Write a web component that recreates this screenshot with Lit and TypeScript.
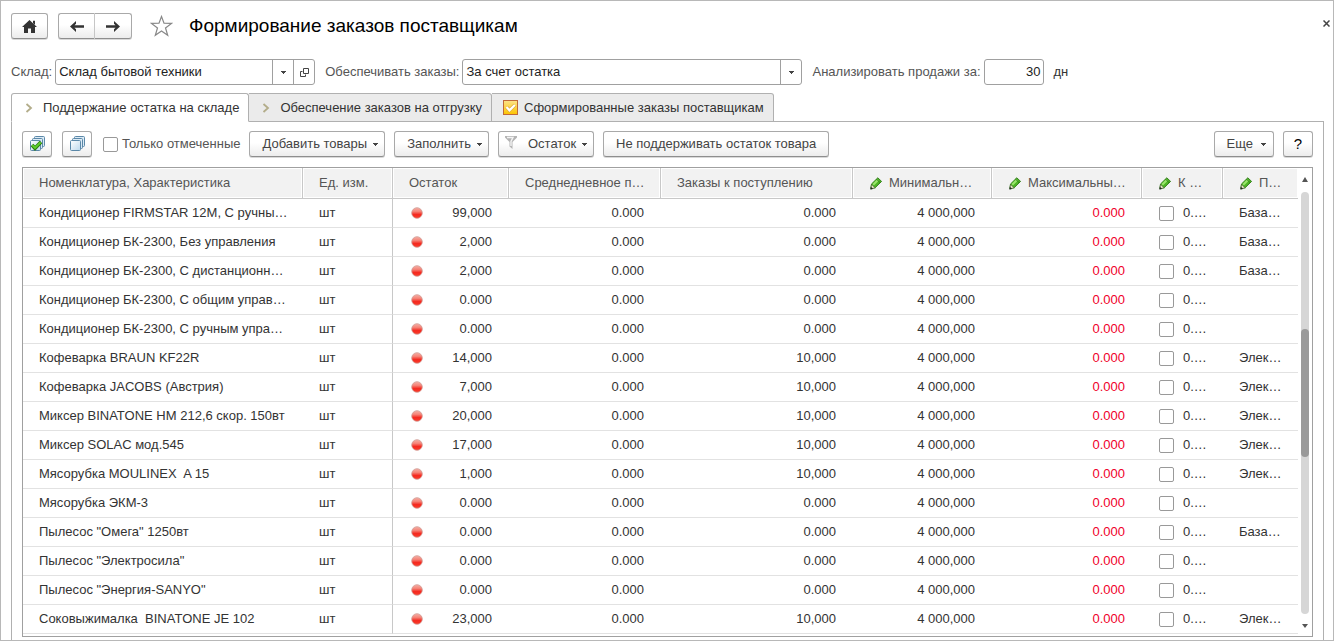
import { LitElement, html, css, svg, nothing } from "lit";
import { customElement, state } from "lit/decorators.js";

interface StockRow {
  name: string;
  rest: string;
  incoming: string;
  method: string;
}

const NO_VALUE = "0.000";

const ROWS: StockRow[] = [
  { name: "Кондиционер FIRMSTAR 12М, С ручны…", rest: "99,000", incoming: NO_VALUE, method: "База…" },
  { name: "Кондиционер БК-2300, Без управления", rest: "2,000", incoming: NO_VALUE, method: "База…" },
  { name: "Кондиционер БК-2300, С дистанционн…", rest: "2,000", incoming: NO_VALUE, method: "База…" },
  { name: "Кондиционер БК-2300, С общим управ…", rest: NO_VALUE, incoming: NO_VALUE, method: "" },
  { name: "Кондиционер БК-2300, С ручным упра…", rest: NO_VALUE, incoming: NO_VALUE, method: "" },
  { name: "Кофеварка BRAUN KF22R", rest: "14,000", incoming: "10,000", method: "Элек…" },
  { name: "Кофеварка JACOBS (Австрия)", rest: "7,000", incoming: "10,000", method: "Элек…" },
  { name: "Миксер BINATONE HM 212,6 скор. 150вт", rest: "20,000", incoming: "10,000", method: "Элек…" },
  { name: "Миксер SOLAC мод.545", rest: "17,000", incoming: "10,000", method: "Элек…" },
  { name: "Мясорубка MOULINEX  A 15", rest: "1,000", incoming: "10,000", method: "Элек…" },
  { name: "Мясорубка ЭКМ-3", rest: NO_VALUE, incoming: NO_VALUE, method: "" },
  { name: 'Пылесос "Омега" 1250вт', rest: NO_VALUE, incoming: NO_VALUE, method: "База…" },
  { name: 'Пылесос "Электросила"', rest: NO_VALUE, incoming: NO_VALUE, method: "" },
  { name: 'Пылесос "Энергия-SANYO"', rest: NO_VALUE, incoming: NO_VALUE, method: "" },
  { name: "Соковыжималка  BINATONE JE 102", rest: "23,000", incoming: "10,000", method: "Элек…" },
];

const caret = html`<svg class="caret" width="5" height="3" viewBox="0 0 5 3" aria-hidden="true">
  <path d="M0 0h5v1H4v1H3v1H2V2H1V1H0z" fill="#444" />
</svg>`;

const chevron = html`<svg width="8" height="10" viewBox="0 0 8 10" aria-hidden="true">
  <path d="M1.5 1l4.5 4-4.5 4" fill="none" stroke="#b3ad8a" stroke-width="1.8" />
</svg>`;

const pencil = html`<svg width="12" height="13" viewBox="0 0 12 13" aria-hidden="true">
  <path d="M.8 11.8L1.500 7 7.800.8l3.800 3.600-6.400 6.300z" fill="#4fb526" stroke="#2f7a16" stroke-width=".9" />
  <path d="M3.200 7.800L8 3" stroke="#9be66c" stroke-width="2" />
  <path d="M6.400 2l4 4" stroke="#2f7a16" stroke-width=".9" />
  <path d="M1.600 7.400l3.600 3.500-4.400.9z" fill="#e6e2c4" stroke="#3f5a2c" stroke-width=".6" />
  <path d="M.4 12.400l.5-2.600 2.100 2.100z" fill="#222" />
</svg>`;

const sheets = (checked: boolean) => html`<svg width="17" height="16" viewBox="0 0 17 16" aria-hidden="true">
  <defs>
    <linearGradient id="sheet" x1="0" y1="0" x2="1" y2="1">
      <stop offset="0" stop-color="#fff" />
      <stop offset="1" stop-color="#bcd8ec" />
    </linearGradient>
  </defs>
  <g stroke="#5b88a8" fill="#dcebf6">
    <rect x="5.500" y=".5" width="10" height="10" rx="1" />
    <rect x="3.500" y="2.500" width="10" height="10" rx="1" />
    <rect x="1.500" y="4.500" width="10" height="10" rx="1" fill="url(#sheet)" />
  </g>
  ${checked
    ? svg`<path d="M3 9l3 3.300L12 6" fill="none" stroke="#2c7d12" stroke-width="3.600" />
        <path d="M3.300 9.200L6 12l5.600-5.600" fill="none" stroke="#5fd02c" stroke-width="1.900" />`
    : nothing}
</svg>`;

const ball = html`<svg width="14" height="14" viewBox="0 0 14 14" role="img" aria-label="Ниже нормы">
  <defs>
    <linearGradient id="ball" x1="0" y1="0" x2="0" y2="1">
      <stop offset="0" stop-color="#f5b0a6" />
      <stop offset=".35" stop-color="#f58478" />
      <stop offset=".65" stop-color="#f5281e" />
      <stop offset="1" stop-color="#f8402f" />
    </linearGradient>
  </defs>
  <circle cx="7" cy="7" r="5.300" fill="url(#ball)" stroke="#cf9a94" stroke-width=".8" />
</svg>`;

@customElement("app-root")
export class AppRoot extends LitElement {
  @state() private activeTab = 0;

  static styles = css`
    :host {
      display: block;
      box-sizing: border-box;
      height: 100vh;
      overflow: hidden;
      border: 1px solid #b8b8b8;
      padding: 12px 9px 0 10px;
      background: #fff;
      color: #333;
      font: 13px/16px "Liberation Sans", Arial, sans-serif;
    }
    *, *::before, *::after { box-sizing: border-box; }
    button, input, select { font: inherit; color: inherit; margin: 0; }
    svg { display: block; flex: none; }
    .header { display: flex; align-items: center; height: 26px; margin-right: -6px; }
    .button {
      display: inline-flex;
      align-items: center;
      justify-content: center;
      height: 26px;
      padding: 0 12px;
      border: 1px solid #a9a9a9;
      border-bottom-color: #8e8e8e;
      border-radius: 3px;
      background: linear-gradient(#fff 45%, #ececec);
      box-shadow: 0 1px 0 #d9d9d9;
      color: #444;
      white-space: nowrap;
    }
    .home { width: 37px; padding: 0; }
    .nav { display: flex; margin-left: 10px; }
    .nav .button { width: 37px; padding: 0; }
    .nav .back { border-radius: 3px 0 0 3px; border-right-color: #c6c6c6; }
    .nav .forward { border-radius: 0 3px 3px 0; border-left: 0; }
    .plain { display: flex; padding: 0; border: 0; background: none; }
    .star { margin-left: 18px; }
    h1 { margin: 0 auto 0 16px; font-size: 19px; line-height: 22px; font-weight: 400; color: #000; }
    .close { margin: 0 0 6px; }
    .filters { display: flex; align-items: center; margin-top: 20px; height: 26px; white-space: nowrap; }
    .filters label { color: #555; margin-right: 3px; }
    .field {
      display: flex;
      height: 26px;
      margin-right: 10px;
      border: 1px solid #a0a0a0;
      border-radius: 3px;
      background: #fff;
      color: #222;
      overflow: hidden;
    }
    .warehouse { flex: 0 1 260px; }
    .supply { flex: 0 1 340px; }
    .days { flex: 0 1 60px; }
    .combo { flex: 1; display: grid; grid-template-columns: 1fr 21px; min-width: 0; }
    .combo select {
      grid-area: 1 / 1 / 2 / 3;
      appearance: none;
      border: 0;
      background: none;
      padding: 0 24px 0 3px;
      min-width: 0;
    }
    .drop {
      grid-area: 1 / 2 / 2 / 3;
      display: flex;
      align-items: center;
      justify-content: center;
      border-left: 1px solid #a0a0a0;
      pointer-events: none;
    }
    .open { width: 21px; align-items: center; justify-content: center; border-left: 1px solid #a0a0a0; }
    .days input { width: 100%; min-width: 0; border: 0; padding: 0 2px; text-align: right; background: none; }
    .tabs { display: flex; position: relative; z-index: 1; margin-top: 8px; }
    .tab {
      display: flex;
      align-items: center;
      height: 29px;
      padding: 0 9px 0 13px;
      border: 1px solid #b0b0b0;
      border-left-width: 0;
      border-radius: 0 3px 0 0;
      background: #ebebeb;
      color: #333;
      gap: 10px;
      white-space: nowrap;
    }
    .tab:first-child { border-left-width: 1px; border-radius: 3px 3px 0 0; }
    .tab.active { background: #fff; border-bottom-color: #fff; }
    .tab.done { padding-left: 11px; gap: 6px; }
    .panel { margin-top: -1px; padding: 9px 10px 0; border: 1px solid #b0b0b0; min-height: 100vh; }
    .toolbar { display: flex; align-items: center; height: 26px; gap: 9px; }
    .tool { width: 30px; padding: 0; }
    .tool + .tool { margin-left: 1px; }
    .only { display: flex; align-items: center; gap: 4px; margin-left: 2px; color: #555; white-space: nowrap; }
    .check {
      appearance: none;
      flex: none;
      width: 15px;
      height: 15px;
      border: 1px solid #999;
      border-radius: 2px;
      background: #fff;
    }
    .check:checked { background: #7fb74c; }
    .menu { padding: 0 6px 0 12px; gap: 6px; }
    .menu.filter { padding-left: 6px; }
    .menu.more { padding-right: 7px; gap: 8px; }
    .filter svg:first-child { margin: 0 5px 4px 0; }
    .spacer { flex: 1; }
    .help { width: 30px; padding: 0; font-size: 15px; color: #000; }
    .grid {
      display: flex;
      margin-top: 10px;
      border: 1px solid #a0a0a0;
      padding-bottom: 2px;
    }
    table { flex: 1; min-width: 0; width: 100%; table-layout: fixed; border-spacing: 0; }
    th, td { padding: 0 16px; text-align: left; font-weight: 400; white-space: pre; overflow: hidden; }
    th {
      height: 31px;
      color: #555;
      background: #f2f2f2;
      border-right: 1px solid #c8c8c8;
      border-bottom: 1px solid #c8c8c8;
      box-shadow: inset 0 0 0 1px #fff;
    }
    th:last-child { border-right: 0; }
    td { height: 29px; border-bottom: 1px solid #e2e2e2; }
    td.unit { border-right: 1px solid #c8c8c8; }
    td.number { padding-right: 17px; text-align: right; }
    td.red { color: #f0002a; }
    .pair { display: flex; align-items: center; justify-content: space-between; margin: 0 1px; }
    .mark { display: flex; align-items: center; gap: 7px; margin-left: 1px; }
    td .mark { gap: 9px; }
    .c-name { width: 280px; }
    .c-unit { width: 90px; }
    .c-rest { width: 116px; }
    .c-daily { width: 152px; }
    .c-incoming { width: 192px; }
    .c-min { width: 139px; }
    .c-max { width: 150px; }
    .c-coef { width: 81px; }
    .c-method { width: 75px; }
    .scroll {
      flex: none;
      display: flex;
      flex-direction: column;
      align-items: center;
      width: 14px;
      padding: 9px 0 6px;
      gap: 10px;
    }
    .track { flex: 1; width: 8px; padding-top: 137px; border-radius: 4px; background: #d6d6d6; }
    .thumb { width: 8px; height: 128px; border-radius: 4px; background: #9a9a9a; }
  `;

  private tab(index: number, icon: unknown, text: string, extra = "") {
    const active = this.activeTab === index;
    return html`<button
      class="tab ${extra} ${active ? "active" : ""}"
      role="tab"
      aria-selected=${active}
      @click=${() => (this.activeTab = index)}
    >${icon}<span>${text}</span></button>`;
  }

  private row(r: StockRow) {
    return html`<tr>
      <td>${r.name}</td>
      <td class="unit">шт</td>
      <td><div class="pair">${ball}<span>${r.rest}</span></div></td>
      <td class="number">${NO_VALUE}</td>
      <td class="number">${r.incoming}</td>
      <td class="number">4 000,000</td>
      <td class="number red">${NO_VALUE}</td>
      <td><label class="mark"><input class="check" type="checkbox" /><span>0.…</span></label></td>
      <td>${r.method}</td>
    </tr>`;
  }

  render() {
    return html`
      <header class="header">
        <button class="button home" aria-label="Начальная страница">
          <svg width="15" height="13" viewBox="0 0 15 13"><path d="M7.500 0L15 7h-2v6H9V8.500H6V13H2V7H0zM11 .8h2v4l-2-1.900z" fill="#333" /></svg>
        </button>
        <div class="nav">
          <button class="button back" aria-label="Назад">
            <svg width="14" height="11" viewBox="0 0 14 11"><path d="M6 0L0 5.500 6 11V8.200L4.500 6.800H14V4.200H4.500L6 2.800z" fill="#333" /></svg>
          </button>
          <button class="button forward" aria-label="Вперед">
            <svg width="14" height="11" viewBox="0 0 14 11"><path d="M8 0l6 5.500L8 11V8.200l1.500-1.400H0V4.200h9.500L8 2.800z" fill="#333" /></svg>
          </button>
        </div>
        <button class="plain star" aria-label="Избранное">
          <svg width="23" height="22" viewBox="0 0 23 22"><path d="M11.500 1.500l2.500 6.700 7.500.2-6 4.500 2.200 7.400-6.200-4.300-6.200 4.300 2.200-7.400-6-4.500 7.500-.2z" fill="#fff" stroke="#888" stroke-width="1.200" /></svg>
        </button>
        <h1>Формирование заказов поставщикам</h1>
        <button class="plain close" aria-label="Закрыть">
          <svg width="7" height="7" viewBox="0 0 7 7"><path d="M.5.5l6 6m0-6l-6 6" stroke="#444" stroke-width="1.500" /></svg>
        </button>
      </header>

      <div class="filters">
        <label for="warehouse">Склад:</label>
        <div class="field warehouse">
          <div class="combo">
            <select id="warehouse"><option>Склад бытовой техники</option></select>
            <span class="drop">${caret}</span>
          </div>
          <button class="plain open" aria-label="Открыть">
            <svg width="9" height="9" viewBox="0 0 9 9"><path d="M3.500.5h5v5h-5zM2.500 3.500h-2v5h5v-2" fill="none" stroke="#444" /></svg>
          </button>
        </div>
        <label for="supply">Обеспечивать заказы:</label>
        <div class="field supply">
          <div class="combo">
            <select id="supply"><option>За счет остатка</option></select>
            <span class="drop">${caret}</span>
          </div>
        </div>
        <label for="days">Анализировать продажи за:</label>
        <div class="field days"><input id="days" type="text" inputmode="numeric" value="30" /></div>
        <span>дн</span>
      </div>

      <div class="tabs" role="tablist">
        ${this.tab(0, chevron, "Поддержание остатка на складе")}
        ${this.tab(1, chevron, "Обеспечение заказов на отгрузку")}
        ${this.tab(2, html`<svg width="15" height="15" viewBox="0 0 15 15" aria-hidden="true">
          <defs><linearGradient id="gold" x1="0" y1="0" x2="0" y2="1"><stop offset="0" stop-color="#fbe28a" /><stop offset="1" stop-color="#fdc400" /></linearGradient></defs>
          <rect x=".5" y=".5" width="14" height="14" fill="url(#gold)" stroke="#c0693a" />
          <path d="M3.500 7l3 3.300L11.800 5" fill="none" stroke="#e0a838" stroke-width="3.400" />
          <path d="M3.500 7l3 3.300L11.800 5" fill="none" stroke="#fff" stroke-width="2.200" />
        </svg>`, "Сформированные заказы поставщикам", "done")}
      </div>

      <section class="panel">
        <div class="toolbar">
          <button class="button tool" aria-label="Отметить все">${sheets(true)}</button>
          <button class="button tool" aria-label="Снять отметки">${sheets(false)}</button>
          <label class="only"><input class="check" type="checkbox" />Только отмеченные</label>
          <button class="button menu">Добавить товары ${caret}</button>
          <button class="button menu">Заполнить ${caret}</button>
          <button class="button menu filter">
            <svg width="12" height="13" viewBox="0 0 12 13" aria-hidden="true"><path d="M0 0h12v1.500L7.500 6v7L4.500 10.500V6L0 1.500z" fill="#b4b4b4" /><path d="M2 1.500h6L6 5.500V10" fill="none" stroke="#f4f4f4" stroke-width="1.400" /></svg>
            Остаток ${caret}
          </button>
          <button class="button">Не поддерживать остаток товара</button>
          <span class="spacer"></span>
          <button class="button menu more">Еще ${caret}</button>
          <button class="button help" aria-label="Справка">?</button>
        </div>

        <div class="grid">
          <table>
            <thead>
              <tr>
                <th class="c-name">Номенклатура, Характеристика</th>
                <th class="c-unit">Ед. изм.</th>
                <th class="c-rest">Остаток</th>
                <th class="c-daily">Среднедневное п…</th>
                <th class="c-incoming">Заказы к поступлению</th>
                <th class="c-min"><div class="mark">${pencil}<span>Минимальн…</span></div></th>
                <th class="c-max"><div class="mark">${pencil}<span>Максимальны…</span></div></th>
                <th class="c-coef"><div class="mark">${pencil}<span>К …</span></div></th>
                <th class="c-method"><div class="mark">${pencil}<span>П…</span></div></th>
              </tr>
            </thead>
            <tbody>${ROWS.map((r) => this.row(r))}</tbody>
          </table>
          <div class="scroll" aria-hidden="true">
            <svg width="6" height="5" viewBox="0 0 6 5"><path d="M3 0l3 5H0z" fill="#555" /></svg>
            <div class="track"><div class="thumb"></div></div>
            <svg width="6" height="4" viewBox="0 0 6 4"><path d="M3 4L0 0h6z" fill="#555" /></svg>
          </div>
        </div>
      </section>
    `;
  }
}
